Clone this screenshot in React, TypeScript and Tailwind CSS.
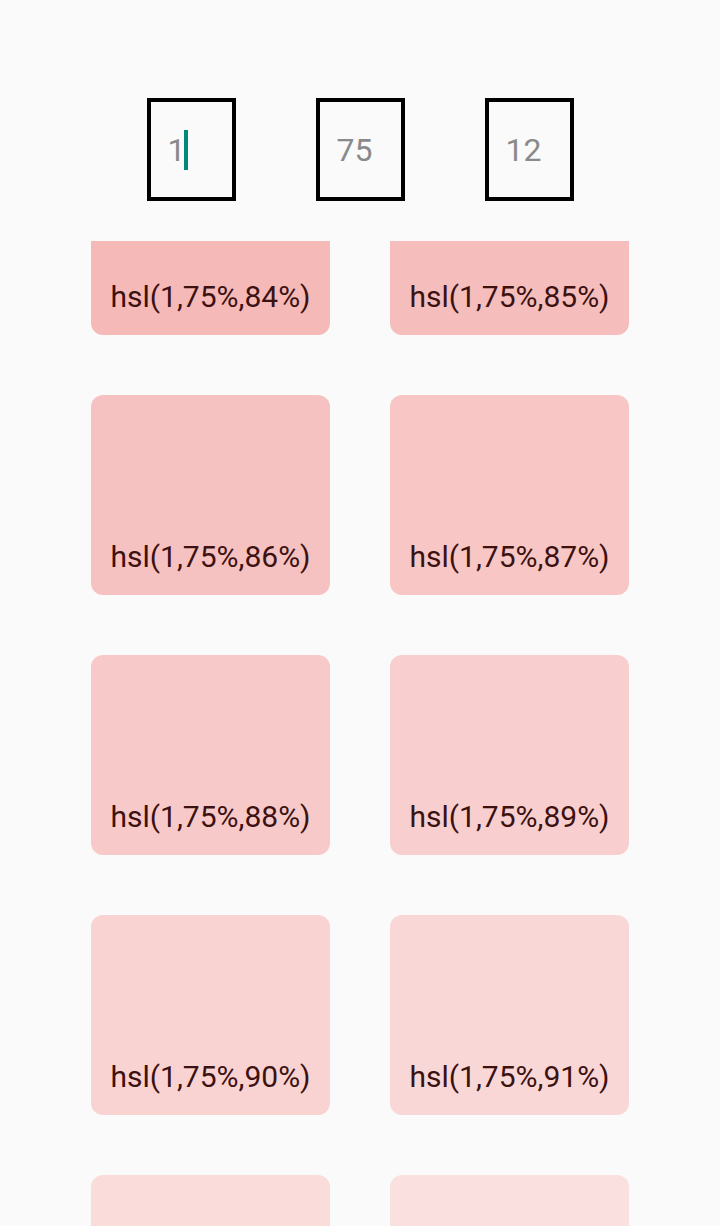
import React from 'react';

const lightness = [84, 85, 86, 87, 88, 89, 90, 91, 92, 93];

const NumberBox: React.FC<{ value: string; focused?: boolean }> = ({ value, focused }) => (
  <div className="w-[89px] h-[103px] border-[4px] border-black flex items-center pl-[17px]">
    <span className="text-[32px] text-[#8a8a8a] leading-none">{value}</span>
    {focused && <span className="-ml-[1px] w-[4px] h-[40px] bg-[#00897b]" />}
  </div>
);

export default function App() {
  return (
    <div className="w-[720px] h-[1226px] bg-[#fafafa] overflow-hidden font-['Roboto',sans-serif]">
      {/* hue / saturation / step inputs */}
      <div className="h-[241px] pt-[98px] flex justify-center gap-[80px]">
        <NumberBox value="1" focused />
        <NumberBox value="75" />
        <NumberBox value="12" />
      </div>

      {/* scrolled list of swatches */}
      <div className="h-[985px] overflow-hidden">
        <div className="-mt-[106px] w-[538px] mx-auto grid grid-cols-2 gap-x-[60px] gap-y-[60px]">
          {lightness.map((l) => (
            <div
              key={l}
              className="h-[200px] rounded-[12px] flex items-end justify-center pb-[23px]"
              style={{ backgroundColor: `hsl(1,75%,${l}%)` }}
            >
              <span className="text-[30px] text-[#3c1110] leading-none">hsl(1,75%,{l}%)</span>
            </div>
          ))}
        </div>
      </div>
    </div>
  );
}
